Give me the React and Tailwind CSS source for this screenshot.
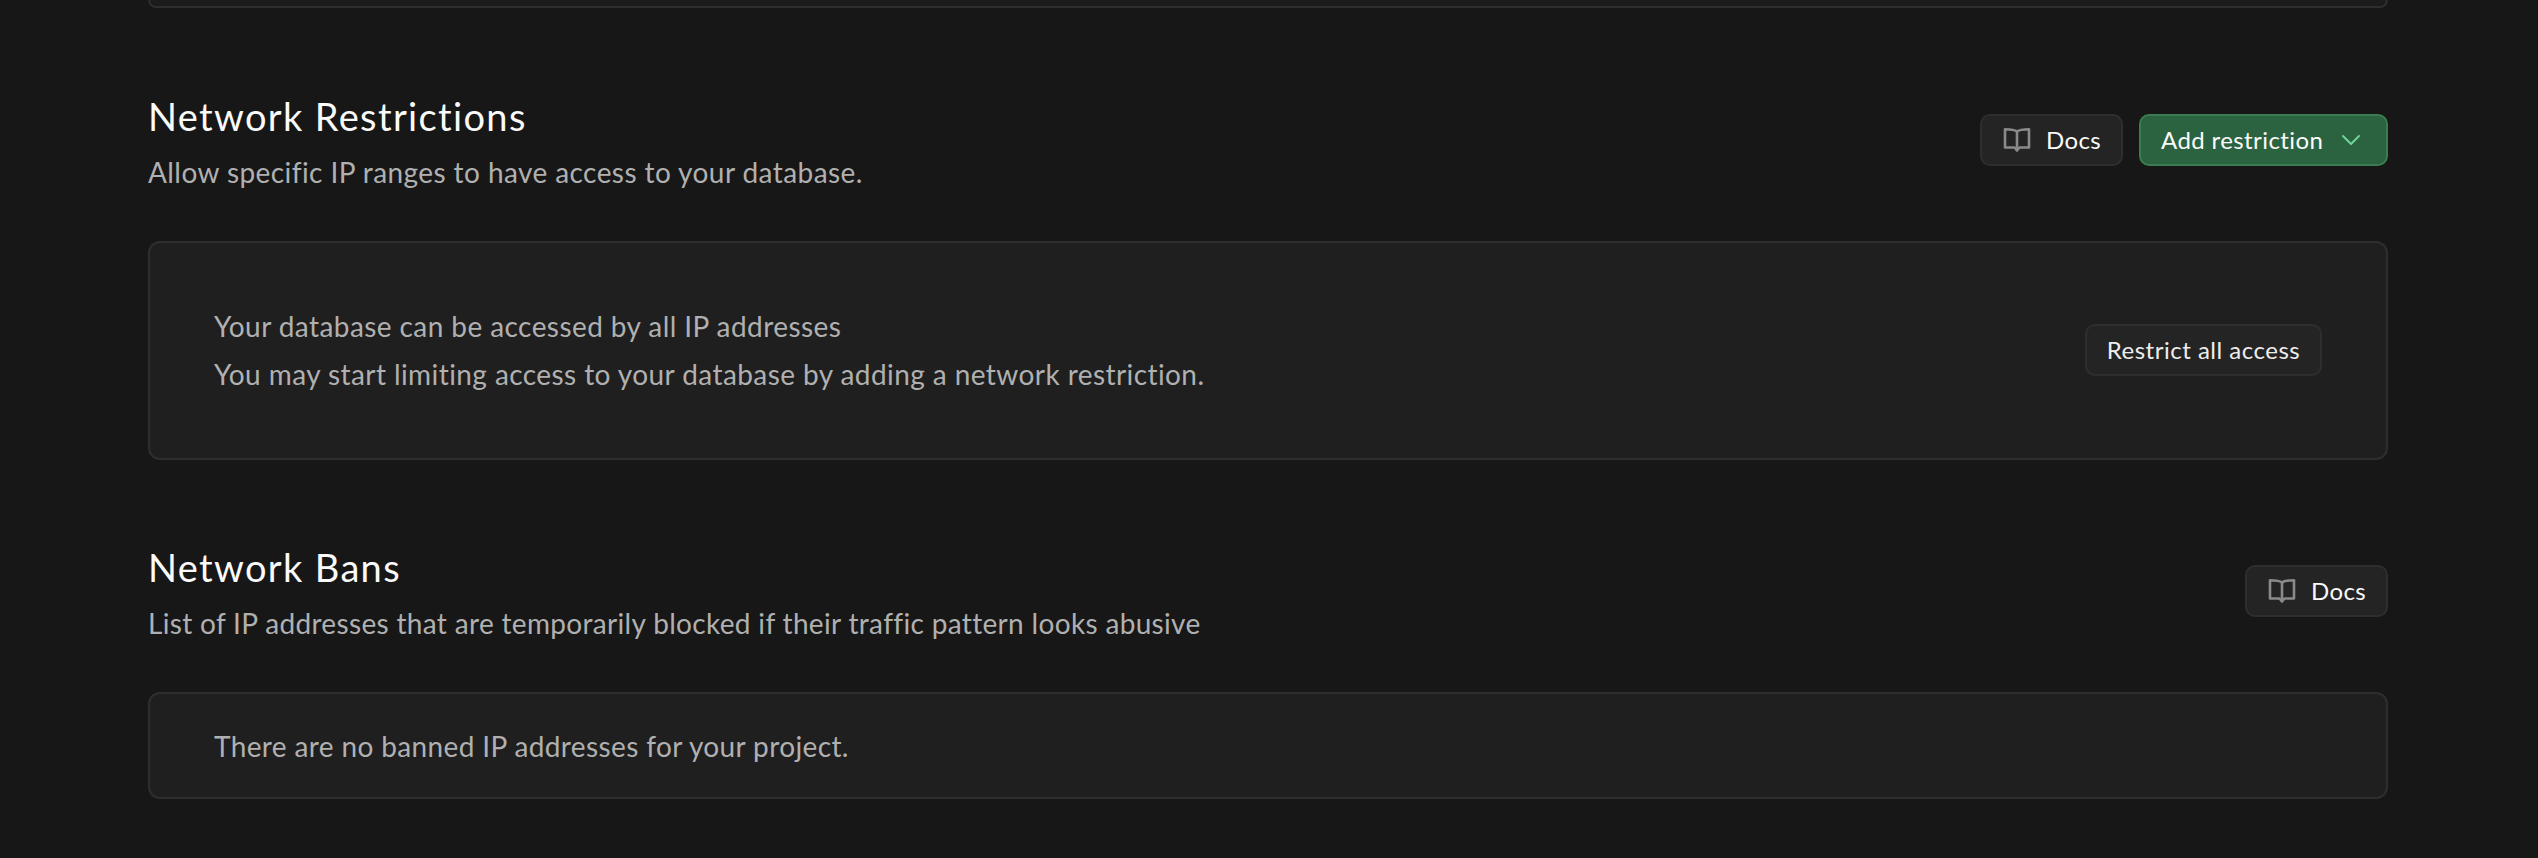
import { ChevronDown } from 'lucide-react';

function BookIcon() {
  return (
    <svg width="28" height="26" viewBox="0 0 28 26" fill="none" stroke="#8a8a8a" strokeWidth="2.6" strokeLinejoin="round">
      <path d="M14 4.5C12 2.8 9 2.2 2 2.2V20.5H11.5L14 23.5L16.5 20.5H26V2.2C19 2.2 16 2.8 14 4.5Z" />
      <path d="M14 4.5V22" />
    </svg>
  );
}

function Button({ children, className = '' }) {
  return (
    <button className={`flex h-[52px] items-center rounded-[10px] border-2 text-[24px] leading-none tracking-[0.4px] ${className}`}>
      {children}
    </button>
  );
}

function DocsButton() {
  return (
    <Button className="w-[143px] border-[#2e2e2e] bg-[#242424] pl-[21px] text-[#fafafa]">
      <BookIcon />
      <span className="ml-[15px]">Docs</span>
    </Button>
  );
}

function SectionHeader({ title, subtitle, subtitleClass, children }) {
  return (
    <div className="flex items-center justify-between">
      <div>
        <h2 className="text-[38px] leading-[46px] font-normal tracking-[1.35px] text-[#fafafa]">{title}</h2>
        <p className={`mt-[14px] text-[28px] leading-[38px] text-[#b0b0b0] ${subtitleClass}`}>{subtitle}</p>
      </div>
      <div className="mb-[4px] flex items-center gap-[16px]">{children}</div>
    </div>
  );
}

export default function App() {
  return (
    <div className="h-[858px] overflow-hidden bg-[#171717] pl-[148px] pr-[150px] font-['Lato',sans-serif]">
      <div className="h-[8px] rounded-b-[12px] border-x-2 border-b-2 border-[#2e2e2e] bg-[#1c1c1c]" />

      <div className="mt-[85px]">
        <SectionHeader
          title="Network Restrictions"
          subtitle="Allow specific IP ranges to have access to your database."
          subtitleClass="tracking-[0.42px]"
        >
          <DocsButton />
          <Button className="w-[249px] border-[#3a7d52] bg-[#2b6340] pl-[20px] text-[#fafafa]">
            <span>Add restriction</span>
            <ChevronDown className="ml-[12px] text-[#6fd39a]" size={32} strokeWidth={1.5} />
          </Button>
        </SectionHeader>
      </div>

      <div className="mt-[50px] flex h-[219px] items-center justify-between rounded-[12px] border-2 border-[#2e2e2e] bg-[#1f1f1f] pl-[64px] pr-[64px]">
        <div className="-mt-[2px] text-[28px] leading-[48px] tracking-[0.42px] text-[#b0b0b0]">
          <p>Your database can be accessed by all IP addresses</p>
          <p>You may start limiting access to your database by adding a network restriction.</p>
        </div>
        <Button className="-mt-[2px] w-[237px] justify-center border-[#2e2e2e] bg-[#242424] tracking-[0.5px] text-[#ededed]">Restrict all access</Button>
      </div>

      <div className="mt-[84px]">
        <SectionHeader
          title="Network Bans"
          subtitle="List of IP addresses that are temporarily blocked if their traffic pattern looks abusive"
          subtitleClass="tracking-[0.33px]"
        >
          <DocsButton />
        </SectionHeader>
      </div>

      <div className="mt-[50px] flex h-[107px] items-center rounded-[12px] border-2 border-[#2e2e2e] bg-[#1f1f1f] pl-[64px] text-[28px] tracking-[0.37px] text-[#b0b0b0]">
        There are no banned IP addresses for your project.
      </div>
    </div>
  );
}
